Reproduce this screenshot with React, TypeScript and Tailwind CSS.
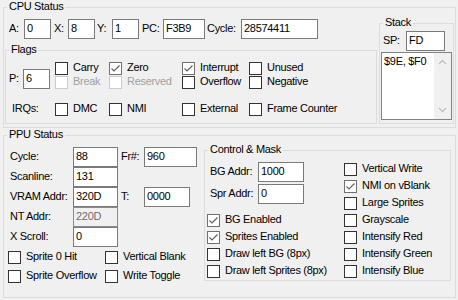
import React from "react";

type BoxProps = { w: string; value: string; disabled?: boolean };

function TextBox({ w, value, disabled }: BoxProps) {
    return (
        <div
            className={`${w} h-[20px] border pl-[2px] flex items-center leading-[13px] ${disabled
                ? "bg-[#f0f0f0] border-[#8a8a8a] text-[#6d6d6d]"
                : "bg-white border-[#7a7a7a] text-black"
                }`}
        >
            <span className="-mt-[1px]">{value}</span>
        </div>
    );
}

function Check({ checked, disabled }: { checked?: boolean; disabled?: boolean }) {
    const border = disabled ? "border-[#cccccc]" : checked ? "border-[#707070]" : "border-[#333333]";
    return (
        <div className={`w-[13px] h-[13px] shrink-0 border bg-white ${border}`}>
            {checked && (
                <svg width="11" height="11" viewBox="0 0 11 11">
                    <polyline points="1.5,5.5 4,8 9.5,2.5" fill="none" stroke="#606060" strokeWidth="1.2" />
                </svg>
            )}
        </div>
    );
}

type CellProps = { label: string; w?: string; checked?: boolean; disabled?: boolean };

function CheckCell({ label, w = "", checked, disabled }: CellProps) {
    return (
        <div className={`${w} h-[13px] flex items-start`}>
            <Check checked={checked} disabled={disabled} />
            <span className={`ml-[5px] -mt-[1px] leading-[13px] whitespace-nowrap ${disabled ? "text-[#a0a0a0]" : ""}`}>
                {label}
            </span>
        </div>
    );
}

function Group({ title, className, children }: { title: string; className: string; children?: React.ReactNode }) {
    return (
        <div className={`relative border border-[#dcdcdc] shrink-0 ${className}`}>
            <span className="absolute left-[3px] top-[-8px] px-[2px] bg-[#f0f0f0] leading-[13px] whitespace-nowrap">
                {title}
            </span>
            {children}
        </div>
    );
}

function Label({ text, className }: { text: string; className: string }) {
    return <span className={`shrink-0 leading-[13px] -mt-[2px] whitespace-nowrap ${className}`}>{text}</span>;
}

function Chevron({ up }: { up?: boolean }) {
    return (
        <svg width="9" height="6" viewBox="0 0 9 6">
            <polyline
                points={up ? "1,5 4.5,1.5 8,5" : "1,1 4.5,4.5 8,1"}
                fill="none"
                stroke="#c0c0c0"
                strokeWidth="1.3"
            />
        </svg>
    );
}

export default function App() {
    return (
        <div className="w-[458px] h-[300px] overflow-hidden bg-[#f0f0f0] pt-[7px] pl-[3px] text-[11px] text-black tracking-[-0.3px] font-['Liberation_Sans',Arial,sans-serif]">

            {/* CPU */}
            <Group title="CPU Status" className="w-[453px] h-[121px] flex">
                <div className="w-[375px] shrink-0">
                    <div className="mt-[11px] h-[20px] flex items-center">
                        <Label text="A:" className="ml-[5px] w-[15px]" />
                        <TextBox w="w-[27px]" value="0" />
                        <Label text="X:" className="ml-[3px] w-[14px]" />
                        <TextBox w="w-[27px]" value="8" />
                        <Label text="Y:" className="ml-[2px] w-[15px]" />
                        <TextBox w="w-[27px]" value="1" />
                        <Label text="PC:" className="ml-[3px] w-[21px]" />
                        <TextBox w="w-[42px]" value="F3B9" />
                        <Label text="Cycle:" className="ml-[2px] w-[34px]" />
                        <TextBox w="w-[77px]" value="28574411" />
                    </div>

                    <Group title="Flags" className="mt-[11px] ml-[1px] w-[372px] h-[74px]">
                        <div className="mt-[11px] flex">
                            <div className="w-[49px] pl-[3px] mt-[7px] h-[20px] flex items-center">
                                <Label text="P:" className="w-[14px]" />
                                <TextBox w="w-[27px]" value="6" />
                            </div>
                            <div className="flex flex-col gap-[1px]">
                                <div className="flex">
                                    <CheckCell w="w-[54px]" label="Carry" />
                                    <CheckCell w="w-[73px]" label="Zero" checked />
                                    <CheckCell w="w-[67px]" label="Interrupt" checked />
                                    <CheckCell label="Unused" />
                                </div>
                                <div className="flex">
                                    <CheckCell w="w-[54px]" label="Break" disabled />
                                    <CheckCell w="w-[73px]" label="Reserved" disabled />
                                    <CheckCell w="w-[67px]" label="Overflow" />
                                    <CheckCell label="Negative" />
                                </div>
                            </div>
                        </div>
                        <div className="mt-[14px] flex items-start">
                            <span className="w-[49px] pl-[6px] -mt-[1px] leading-[13px]">IRQs:</span>
                            <CheckCell w="w-[54px]" label="DMC" />
                            <CheckCell w="w-[73px]" label="NMI" />
                            <CheckCell w="w-[67px]" label="External" />
                            <CheckCell label="Frame Counter" />
                        </div>
                    </Group>
                </div>

                <Group title="Stack" className="mt-[15px] w-[75px] h-[101px]">
                    <div className="mt-[7px] pl-[3px] h-[20px] flex items-center">
                        <Label text="SP:" className="w-[23px]" />
                        <TextBox w="w-[39px]" value="FD" />
                    </div>
                    <div className="mt-[1px] ml-[1px] w-[71px] h-[68px] border border-[#828282] bg-white flex">
                        <div className="flex-1 pl-[2px] pt-[2px] leading-[13px] whitespace-nowrap">$9E, $F0</div>
                        <div className="w-[17px] bg-[#f0f0f0] flex flex-col items-center justify-between pt-[6px] pb-[6px]">
                            <Chevron up />
                            <Chevron />
                        </div>
                    </div>
                </Group>
            </Group>

            {/* PPU */}
            <Group title="PPU Status" className="mt-[7px] w-[453px] h-[163px] flex">
                <div className="w-[200px] shrink-0">
                    <div className="mt-[11px] flex flex-col">
                        <div className="h-[20px] flex items-center">
                            <Label text="Cycle:" className="pl-[6px] w-[69px]" />
                            <TextBox w="w-[45px]" value="88" />
                            <Label text="Fr#:" className="ml-[3px] w-[23px]" />
                            <TextBox w="w-[53px]" value="960" />
                        </div>
                        <div className="h-[20px] flex items-center">
                            <Label text="Scanline:" className="pl-[6px] w-[69px]" />
                            <TextBox w="w-[45px]" value="131" />
                        </div>
                        <div className="h-[20px] flex items-center">
                            <Label text="VRAM Addr:" className="pl-[6px] w-[69px]" />
                            <TextBox w="w-[45px]" value="320D" />
                            <Label text="T:" className="ml-[3px] w-[23px]" />
                            <TextBox w="w-[46px]" value="0000" />
                        </div>
                        <div className="h-[20px] flex items-center">
                            <Label text="NT Addr:" className="pl-[6px] w-[69px]" />
                            <TextBox w="w-[45px]" value="220D" disabled />
                        </div>
                        <div className="h-[20px] flex items-center">
                            <Label text="X Scroll:" className="pl-[6px] w-[69px]" />
                            <TextBox w="w-[45px]" value="0" />
                        </div>
                    </div>
                    <div className="mt-[4px] pl-[4px] flex flex-col gap-[6px]">
                        <div className="flex">
                            <CheckCell w="w-[97px]" label="Sprite 0 Hit" />
                            <CheckCell label="Vertical Blank" />
                        </div>
                        <div className="flex">
                            <CheckCell w="w-[97px]" label="Sprite Overflow" />
                            <CheckCell label="Write Toggle" />
                        </div>
                    </div>
                </div>

                <Group title="Control & Mask" className="mt-[14px] w-[247px] h-[131px] flex">
                    <div className="w-[139px] shrink-0">
                        <div className="mt-[11px] h-[20px] flex items-center">
                            <Label text="BG Addr:" className="pl-[5px] w-[53px]" />
                            <TextBox w="w-[46px]" value="1000" />
                        </div>
                        <div className="mt-[2px] h-[20px] flex items-center">
                            <Label text="Spr Addr:" className="pl-[5px] w-[53px]" />
                            <TextBox w="w-[46px]" value="0" />
                        </div>
                        <div className="mt-[10px] pl-[2px] flex flex-col gap-[4px]">
                            <CheckCell label="BG Enabled" checked />
                            <CheckCell label="Sprites Enabled" checked />
                            <CheckCell label="Draw left BG (8px)" />
                            <CheckCell label="Draw left Sprites (8px)" />
                        </div>
                    </div>
                    <div className="mt-[12px] flex flex-col gap-[4px]">
                        <CheckCell label="Vertical Write" />
                        <CheckCell label="NMI on vBlank" checked />
                        <CheckCell label="Large Sprites" />
                        <CheckCell label="Grayscale" />
                        <CheckCell label="Intensify Red" />
                        <CheckCell label="Intensify Green" />
                        <CheckCell label="Intensify Blue" />
                    </div>
                </Group>
            </Group>
        </div>
    );
}
